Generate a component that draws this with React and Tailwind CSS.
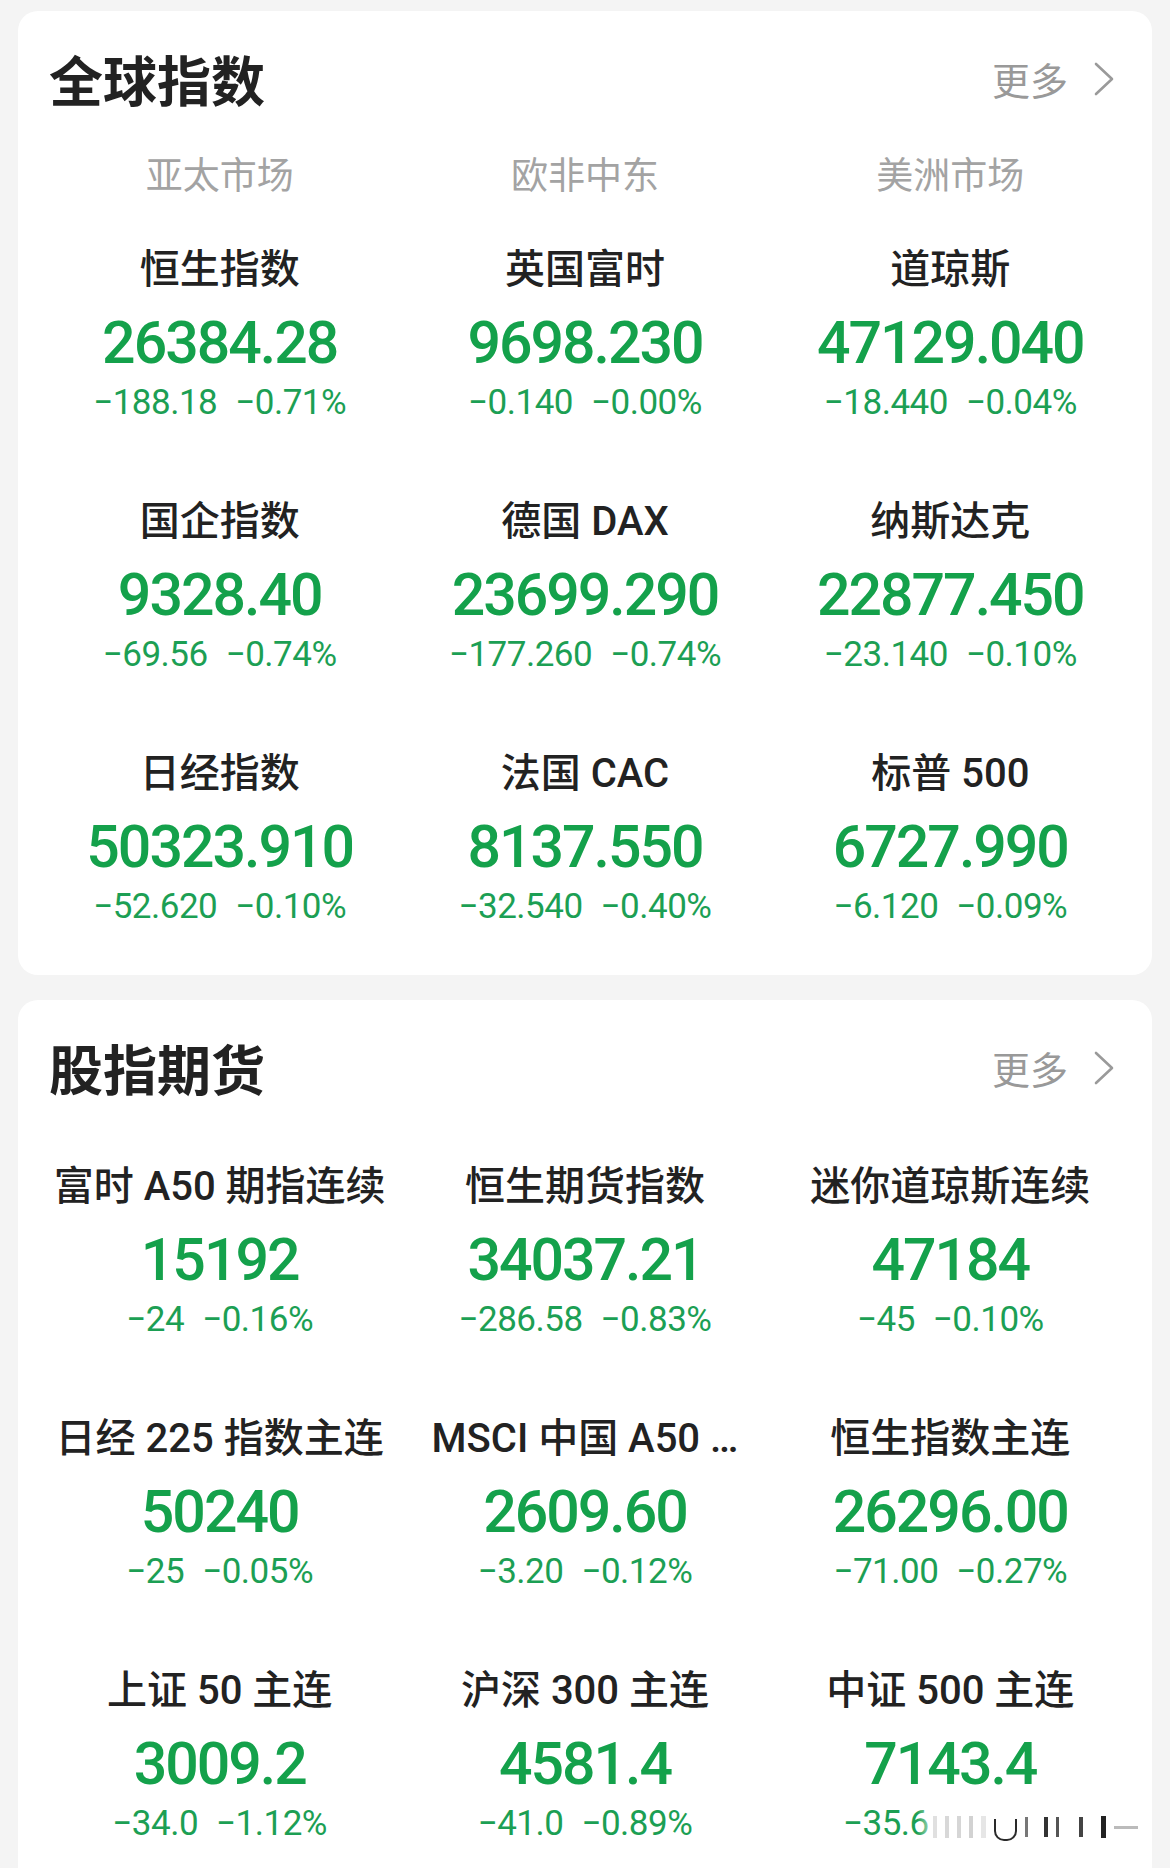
import React from 'react';

const globalCols = ['亚太市场', '欧非中东', '美洲市场'];

const globalItems = [
  ['恒生指数', '26384.28', '−188.18', '−0.71%'],
  ['英国富时', '9698.230', '−0.140', '−0.00%'],
  ['道琼斯', '47129.040', '−18.440', '−0.04%'],
  ['国企指数', '9328.40', '−69.56', '−0.74%'],
  ['德国 DAX', '23699.290', '−177.260', '−0.74%'],
  ['纳斯达克', '22877.450', '−23.140', '−0.10%'],
  ['日经指数', '50323.910', '−52.620', '−0.10%'],
  ['法国 CAC', '8137.550', '−32.540', '−0.40%'],
  ['标普 500', '6727.990', '−6.120', '−0.09%'],
];

const futureItems = [
  ['富时 A50 期指连续', '15192', '−24', '−0.16%'],
  ['恒生期货指数', '34037.21', '−286.58', '−0.83%'],
  ['迷你道琼斯连续', '47184', '−45', '−0.10%'],
  ['日经 225 指数主连', '50240', '−25', '−0.05%'],
  ['MSCI 中国 A50 …', '2609.60', '−3.20', '−0.12%'],
  ['恒生指数主连', '26296.00', '−71.00', '−0.27%'],
  ['上证 50 主连', '3009.2', '−34.0', '−1.12%'],
  ['沪深 300 主连', '4581.4', '−41.0', '−0.89%'],
  ['中证 500 主连', '7143.4', '−35.6', '−0.50%'],
];

const Header = ({ title }) => (
  <div className="flex items-center justify-between pl-[31px] pr-[38px] pt-[40px]">
    <h2 className="text-[54px] leading-[56px] font-bold text-[#222] font-['Noto_Sans_CJK_SC',sans-serif]">{title}</h2>
    <div className="flex items-center text-[#999]">
      <span className="text-[38px] leading-[56px] font-['Noto_Sans_CJK_SC',sans-serif]">更多</span>
      <svg className="ml-[26px]" width="20" height="34" viewBox="0 0 20 34" fill="none">
        <path d="M2 2 L18 17 L2 32" stroke="#9a9a9a" strokeWidth="2.6" strokeLinecap="round" strokeLinejoin="round" />
      </svg>
    </div>
  </div>
);

const Cell = ({ item }) => {
  const [name, price, chg, pct] = item;
  return (
    <div className="flex flex-col items-center pt-[47px] pb-[29px]">
      <div className="h-[56px] leading-[56px] text-[40px] font-medium text-[#222] whitespace-nowrap font-['Roboto','Noto_Sans_CJK_SC',sans-serif]">
        {name}
      </div>
      <div className="h-[90px] leading-[90px] text-[59px] font-medium tracking-[-2px] text-[#14a14b] font-['Roboto',sans-serif]">
        {price}
      </div>
      <div className="h-[30px] leading-[30px] flex gap-[18px] text-[35px] tracking-[-0.5px] text-[#1c9f54] font-['Roboto',sans-serif]">
        <span>{chg}</span>
        <span>{pct}</span>
      </div>
    </div>
  );
};

// blurry watermark sitting over the last change line
const Watermark = () => (
  <div className="absolute left-[899px] top-[810px] w-[230px] h-[34px] bg-linear-to-r from-white/0 from-0% via-white via-10% to-white">
    <div className="flex h-full items-center gap-[8px] pl-[16px] blur-[0.7px]">
      <span className="w-[4px] h-[22px] bg-[#e0e0e0]"></span>
      <span className="w-[4px] h-[22px] bg-[#d8d8d8]"></span>
      <span className="w-[4px] h-[22px] bg-[#d6d6d6]"></span>
      <span className="w-[4px] h-[22px] bg-[#d2d2d2]"></span>
      <span className="w-[5px] h-[22px] bg-[#e6e6e6]"></span>
      <span className="w-[23px] h-[22px] mt-[6px] rounded-b-[10px] border-b-[2px] border-x-[2px] border-[#2a2a2a]"></span>
      <span className="w-[3px] h-[20px] bg-[#777]"></span>
      <span className="w-[4px] h-[20px] bg-[#333] ml-[8px]"></span>
      <span className="w-[3px] h-[20px] bg-[#555]"></span>
      <span className="w-[4px] h-[20px] bg-[#444] ml-[12px]"></span>
      <span className="w-[5px] h-[22px] bg-[#222] ml-[10px]"></span>
      <span className="w-[24px] h-[3px] bg-[#bbb]"></span>
    </div>
  </div>
);

export default function App() {
  return (
    <div className="h-[1868px] w-[1170px] overflow-hidden bg-[#f4f4f4] pt-[11px]">
      <section className="mx-[18px] rounded-[20px] bg-white pb-[24px]">
        <Header title="全球指数" />
        <div className="grid grid-cols-3 px-[19px] mt-[44px]">
          {globalCols.map((c) => (
            <div key={c} className="h-[44px] leading-[44px] text-center text-[37px] text-[#a3a3a3] font-['Noto_Sans_CJK_SC',sans-serif]">
              {c}
            </div>
          ))}
        </div>
        <div className="grid grid-cols-3 px-[19px]">
          {globalItems.map((it) => (
            <Cell key={it[0]} item={it} />
          ))}
        </div>
      </section>

      <section className="relative mx-[18px] mt-[25px] rounded-t-[20px] bg-white">
        <Header title="股指期货" />
        <div className="grid grid-cols-3 px-[19px] mt-[16px]">
          {futureItems.map((it) => (
            <Cell key={it[0]} item={it} />
          ))}
        </div>
        <Watermark />
      </section>
    </div>
  );
}
